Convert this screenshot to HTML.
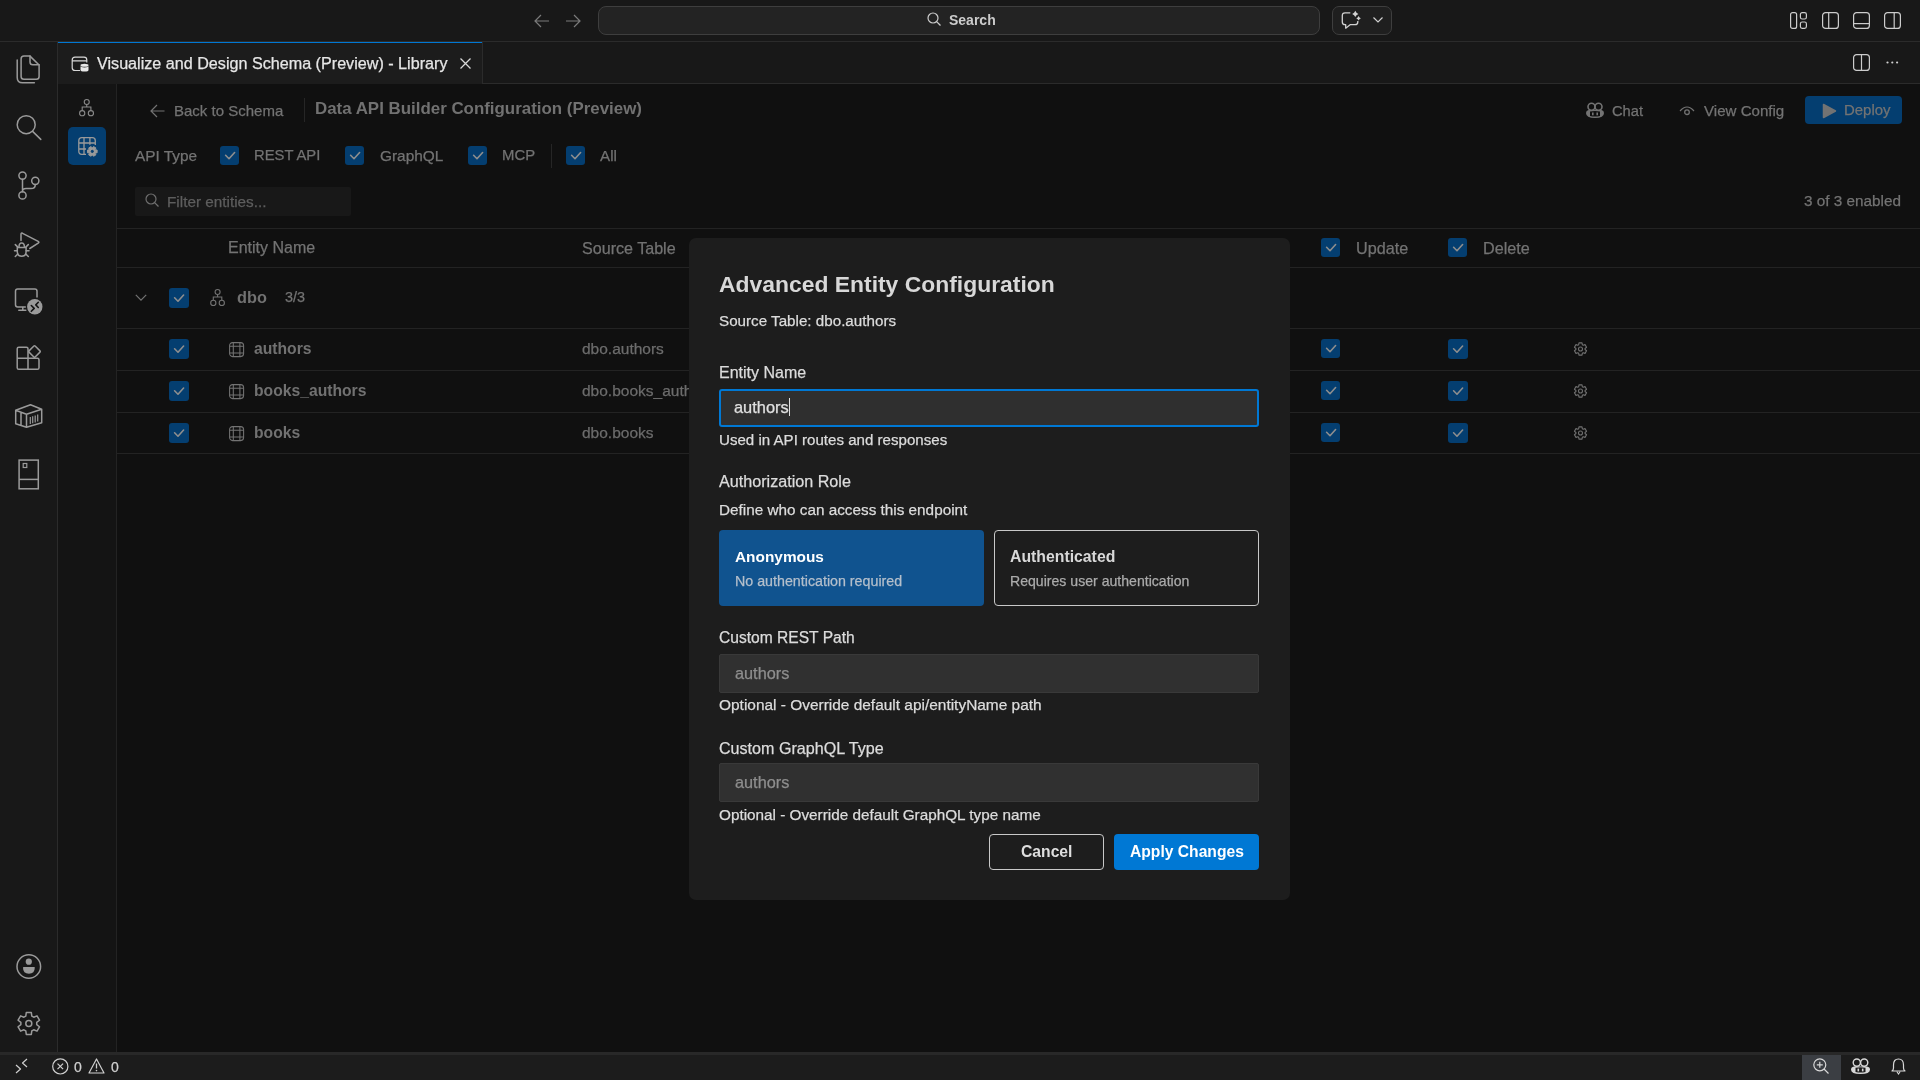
<!DOCTYPE html>
<html><head><meta charset="utf-8">
<title>Data API Builder Configuration</title>
<style>
*{box-sizing:border-box;margin:0;padding:0}
html,body{width:1920px;height:1080px;overflow:hidden;background:#101010;font-family:"Liberation Sans",sans-serif;color:#ccc;position:relative}
.abs{position:absolute}
svg{position:absolute;overflow:visible}
.t{position:absolute;white-space:nowrap;line-height:1;will-change:transform}
</style></head>
<body>
<div class="abs" style="left:0px;top:0px;width:1920px;height:41px;background:#181818"></div>
<div class="abs" style="left:0px;top:41px;width:1920px;height:1px;background:#2b2b2b"></div>
<div class="abs" style="left:0px;top:42px;width:57px;height:1011px;background:#181818"></div>
<div class="abs" style="left:57px;top:42px;width:1px;height:1011px;background:#2b2b2b"></div>
<div class="abs" style="left:58px;top:42px;width:1862px;height:41px;background:#181818"></div>
<div class="abs" style="left:483px;top:83px;width:1437px;height:1px;background:#2b2b2b"></div>
<div class="abs" style="left:58px;top:42px;width:424px;height:42px;background:#1c1c1c"></div>
<div class="abs" style="left:58px;top:42px;width:424px;height:1px;background:#0078d4"></div>
<div class="abs" style="left:482px;top:42px;width:1px;height:42px;background:#2b2b2b"></div>
<div class="abs" style="left:58px;top:84px;width:58px;height:968px;background:#141414"></div>
<div class="abs" style="left:116px;top:84px;width:1px;height:968px;background:#232323"></div>
<div class="abs" style="left:0px;top:1052px;width:1920px;height:3px;background:#282828"></div>
<div class="abs" style="left:0px;top:1055px;width:1920px;height:25px;background:#1c1c1c"></div>
<svg style="left:534px;top:14px;" width="16" height="14" viewBox="0 0 16 14" fill="none"><path d="M7 1 L1 7 L7 13 M1 7 H15" stroke="#7b7b7b" stroke-width="1.2"/></svg>
<svg style="left:565px;top:14px;" width="16" height="14" viewBox="0 0 16 14" fill="none"><path d="M9 1 L15 7 L9 13 M15 7 H1" stroke="#7b7b7b" stroke-width="1.2"/></svg>
<div class="abs" style="left:598px;top:6px;width:722px;height:29px;background:#232323;border:1px solid #3e3e3e;border-radius:8px"></div>
<svg style="left:927px;top:12px;" width="14" height="14" viewBox="0 0 14 14" fill="none"><circle cx="6" cy="6" r="5" stroke="#cccccc" stroke-width="1.2"/><path d="M9.6 9.6 L13.5 13.5" stroke="#cccccc" stroke-width="1.3"/></svg>
<div class="t" style="left:948.5px;top:13.15px;font-size:14px;color:#cccccc;font-weight:700;">Search</div>
<div class="abs" style="left:1332px;top:6px;width:60px;height:29px;background:#1f1f1f;border:1px solid #3e3e3e;border-radius:7px"></div>
<svg style="left:1341px;top:11px;" width="20" height="18" viewBox="0 0 20 18" fill="none"><path d="M9.3 1.8 H4 Q1.3 1.8 1.3 4.5 V11 Q1.3 13.7 4 13.7 H4.7 V17.2 L9.1 13.7 H14.1 Q16.8 13.7 16.8 11 V9.9" stroke="#d0d0d0" stroke-width="1.3" stroke-linejoin="round"/><path d="M14.3 -0.20000000000000018 Q15.168000000000001 2.032 17.400000000000002 2.9 Q15.168000000000001 3.768 14.3 6.0 Q13.432 3.768 11.200000000000001 2.9 Q13.432 2.032 14.3 -0.20000000000000018 Z" fill="#d0d0d0"/><path d="M17.6 4.9 Q18.244 6.556 19.900000000000002 7.2 Q18.244 7.844 17.6 9.5 Q16.956000000000003 7.844 15.3 7.2 Q16.956000000000003 6.556 17.6 4.9 Z" fill="#d0d0d0"/></svg>
<svg style="left:1373px;top:17px;" width="10" height="6" viewBox="0 0 10 6" fill="none"><path d="M0.5 0.5 L5 5 L9.5 0.5" stroke="#d0d0d0" stroke-width="1.2"/></svg>
<svg style="left:1790px;top:12px;" width="17" height="17" viewBox="0 0 17 17" fill="none"><rect x="0.6" y="0.6" width="6" height="15.8" rx="2" stroke="#cccccc" stroke-width="1.2"/><rect x="10.4" y="0.6" width="6" height="6.4" rx="1.8" stroke="#cccccc" stroke-width="1.2"/><rect x="10.4" y="10" width="6" height="6.4" rx="1.8" stroke="#cccccc" stroke-width="1.2"/></svg>
<svg style="left:1822px;top:12px;" width="17" height="17" viewBox="0 0 17 17" fill="none"><rect x="0.6" y="0.6" width="15.8" height="15.8" rx="3" stroke="#cccccc" stroke-width="1.2"/><path d="M6.7 0.6 V16.4" stroke="#cccccc" stroke-width="1.2"/></svg>
<svg style="left:1853px;top:12px;" width="17" height="17" viewBox="0 0 17 17" fill="none"><rect x="0.6" y="0.6" width="15.8" height="15.8" rx="3" stroke="#cccccc" stroke-width="1.2"/><path d="M0.6 11.6 H16.4" stroke="#cccccc" stroke-width="1.2"/></svg>
<svg style="left:1884px;top:12px;" width="17" height="17" viewBox="0 0 17 17" fill="none"><rect x="0.6" y="0.6" width="15.8" height="15.8" rx="3" stroke="#cccccc" stroke-width="1.2"/><path d="M10.2 0.6 V16.4" stroke="#cccccc" stroke-width="1.2"/></svg>
<svg style="left:71px;top:56px;" width="18" height="16" viewBox="0 0 18 16" fill="none"><path d="M9 14.5 H4 Q1.2 14.5 1.2 11.8 V4 Q1.2 1.2 4 1.2 H13 Q15.8 1.2 15.8 4 V6.5 M1.2 4.8 H15.8" stroke="#d8d8d8" stroke-width="1.2"/><ellipse cx="13.5" cy="9.2" rx="4" ry="1.5" fill="#e8e8e8"/><path d="M9.5 10 V14 Q9.5 15.6 13.5 15.6 Q17.5 15.6 17.5 14 V10 Q17.5 11.4 13.5 11.4 Q9.5 11.4 9.5 10 Z" fill="#e8e8e8"/></svg>
<div class="t" style="left:97px;top:55.33px;font-size:16.15px;color:#e6e6e6;-webkit-text-stroke:0.25px #e6e6e6;">Visualize and Design Schema (Preview) - Library</div>
<svg style="left:460px;top:58px;" width="11" height="11" viewBox="0 0 11 11" fill="none"><path d="M0.5 0.5 L10.5 10.5 M10.5 0.5 L0.5 10.5" stroke="#d8d8d8" stroke-width="1.3"/></svg>
<svg style="left:1853px;top:54px;" width="17" height="17" viewBox="0 0 17 17" fill="none"><rect x="0.6" y="0.6" width="15.8" height="15.8" rx="3" stroke="#cccccc" stroke-width="1.2"/><path d="M8.5 0.6 V16.4" stroke="#cccccc" stroke-width="1.2"/></svg>
<svg style="left:1886px;top:61px;" width="13" height="3" viewBox="0 0 13 3" fill="none"><circle cx="1.5" cy="1.5" r="1.1" fill="#d0d0d0"/><circle cx="6.3" cy="1.5" r="1.1" fill="#d0d0d0"/><circle cx="11.1" cy="1.5" r="1.1" fill="#d0d0d0"/></svg>
<svg style="left:10px;top:50px;" width="36" height="40" viewBox="0 0 36 40" fill="none"><path d="M14 6.1 H20 L29.1 15 V26.5 Q29.1 29.3 26.3 29.3 H14 Q11.1 29.3 11.1 26.5 V9 Q11.1 6.1 14 6.1 Z" stroke="#9a9a9a" stroke-width="1.5" stroke-linejoin="round" stroke-linecap="round"/><path d="M20 6.1 V12 Q20 14.8 22.8 14.8 H29.1" stroke="#9a9a9a" stroke-width="1.5" stroke-linejoin="round" stroke-linecap="round"/><path d="M7.2 10 V27.5 Q7.2 32.8 12.5 32.8 H24.4" stroke="#9a9a9a" stroke-width="1.5" stroke-linejoin="round" stroke-linecap="round"/></svg>
<svg style="left:10px;top:110px;" width="36" height="36" viewBox="0 0 36 36" fill="none"><circle cx="16.2" cy="14.7" r="9" stroke="#9a9a9a" stroke-width="1.5" stroke-linejoin="round" stroke-linecap="round"/><path d="M22.6 21.4 L30.8 29.4" stroke="#9a9a9a" stroke-width="1.5" stroke-linejoin="round" stroke-linecap="round"/></svg>
<svg style="left:10px;top:166px;" width="36" height="40" viewBox="0 0 36 40" fill="none"><circle cx="12.5" cy="9.6" r="3.6" stroke="#9a9a9a" stroke-width="1.5" stroke-linejoin="round" stroke-linecap="round"/><circle cx="25.3" cy="14.8" r="3.6" stroke="#9a9a9a" stroke-width="1.5" stroke-linejoin="round" stroke-linecap="round"/><circle cx="12.5" cy="29.4" r="3.6" stroke="#9a9a9a" stroke-width="1.5" stroke-linejoin="round" stroke-linecap="round"/><path d="M12.5 13.2 V25.8 M25.3 18.4 Q25.3 22.5 21 22.5 H16 Q12.5 22.5 12.5 25.5" stroke="#9a9a9a" stroke-width="1.5" stroke-linejoin="round" stroke-linecap="round"/></svg>
<svg style="left:10px;top:226px;" width="36" height="36" viewBox="0 0 36 36" fill="none"><path d="M11 14.5 V8.3 Q11 6.6 12.6 7.3 L28.2 15.4 Q29.6 16.3 28.2 17.2 L19.8 22.5" stroke="#9a9a9a" stroke-width="1.5" stroke-linejoin="round" stroke-linecap="round"/><path d="M9 20.8 Q9 17 11.7 17 Q14.4 17 14.4 20.8" stroke="#9a9a9a" stroke-width="1.5" stroke-linejoin="round" stroke-linecap="round"/><path d="M7.3 21.6 H16.1 V25.8 Q16.1 30.2 11.7 30.2 Q7.3 30.2 7.3 25.8 Z" stroke="#9a9a9a" stroke-width="1.5" stroke-linejoin="round" stroke-linecap="round"/><path d="M5.3 18.6 L7.6 20.9 M18.3 18.6 L16 20.9 M4.5 24.7 H7.3 M16.1 24.7 H19 M5.3 30.5 L7.8 28 M18.3 30.5 L15.8 28" stroke="#9a9a9a" stroke-width="1.5" stroke-linejoin="round" stroke-linecap="round"/></svg>
<svg style="left:10px;top:284px;" width="36" height="36" viewBox="0 0 36 36" fill="none"><path d="M27 13 V7.2 Q27 5 24.8 5 H7.7 Q5.5 5 5.5 7.2 V20.8 Q5.5 23 7.7 23 H15.3 M12.8 23 V26.3 M8.8 26.3 H15.8" stroke="#9a9a9a" stroke-width="1.5" stroke-linejoin="round" stroke-linecap="round"/><circle cx="24.8" cy="22.7" r="7.7" fill="#9a9a9a"/><path d="M21.3 21.5 L24.2 24.4 L21.3 27.3 M28.3 18.3 L25.8 20.9 L28.3 23.5" stroke="#141414" stroke-width="1.6" stroke-linecap="round" stroke-linejoin="round"/></svg>
<svg style="left:10px;top:340px;" width="36" height="36" viewBox="0 0 36 36" fill="none"><path d="M18 18.2 V8.8 Q18 7.2 16.4 7.2 H8.8 Q7.2 7.2 7.2 8.8 V27.7 Q7.2 29.3 8.8 29.3 H27.4 Q29 29.3 29 27.7 V19.8 Q29 18.2 27.4 18.2 H7.2 M18 18.2 V29.3" stroke="#9a9a9a" stroke-width="1.5" stroke-linejoin="round" stroke-linecap="round"/><path d="M23.9 6 Q24.5 5.4 25.1 6 L30 10.9 Q30.6 11.5 30 12.1 L25.1 17 Q24.5 17.6 23.9 17 L19 12.1 Q18.4 11.5 19 10.9 Z" stroke="#9a9a9a" stroke-width="1.5" stroke-linejoin="round" stroke-linecap="round"/></svg>
<svg style="left:10px;top:398px;" width="36" height="36" viewBox="0 0 36 36" fill="none"><path d="M5.7 12.3 L20.5 6.7 L31.7 11.3 V24.7 L16.5 29.3 L5.7 25.7 Z M5.7 12.3 L16.5 16.3 L31.7 11.3 M16.5 16.3 V29.3 M11 14.5 V27.5" stroke="#9a9a9a" stroke-width="1.5" stroke-linejoin="round" stroke-linecap="round"/><path d="M20.3 19 V26 M22.7 18.2 V25.2 M25.2 17.4 V24.4 M27.7 16.6 V23.6" stroke="#9a9a9a" stroke-width="1.2"/></svg>
<svg style="left:10px;top:454px;" width="36" height="40" viewBox="0 0 36 40" fill="none"><rect x="9.1" y="6.1" width="19.2" height="28.7" stroke="#9a9a9a" stroke-width="1.5"/><path d="M9.1 25.4 H28.3" stroke="#9a9a9a" stroke-width="1.5"/><rect x="13.2" y="9.5" width="3.6" height="4" stroke="#9a9a9a" stroke-width="1.2"/></svg>
<svg style="left:10px;top:948px;" width="36" height="36" viewBox="0 0 36 36" fill="none"><circle cx="18.8" cy="18.5" r="11.8" stroke="#9a9a9a" stroke-width="1.5" stroke-linejoin="round" stroke-linecap="round"/><circle cx="18.8" cy="13.7" r="3.1" fill="#9a9a9a"/><path d="M13 19.6 Q13 19 13.6 19 H24 Q24.8 19 24.8 19.6 Q24.8 25.8 18.9 25.8 Q13 25.8 13 19.6 Z" fill="#9a9a9a"/></svg>
<svg style="left:10px;top:1005px;" width="36" height="36" viewBox="0 0 36 36" fill="none"><path d="M15.80 11.08 L16.28 7.59 L21.32 7.59 L21.80 11.08 L23.73 12.20 L26.99 10.86 L29.51 15.23 L26.72 17.39 L26.72 19.61 L29.51 21.77 L26.99 26.14 L23.73 24.80 L21.80 25.92 L21.32 29.41 L16.28 29.41 L15.80 25.92 L13.87 24.80 L10.61 26.14 L8.09 21.77 L10.88 19.61 L10.88 17.39 L8.09 15.23 L10.61 10.86 L13.87 12.20 Z" stroke="#9a9a9a" stroke-width="1.5" stroke-linejoin="round" fill="none"/><circle cx="18.8" cy="18.5" r="3.0" stroke="#9a9a9a" stroke-width="1.5"/></svg>
<svg style="left:79px;top:99px;" width="16" height="18" viewBox="0 0 16 18" fill="none"><circle cx="7.75" cy="3" r="2.5" stroke="#8a8a8a" stroke-width="1.1"/><circle cx="3.2" cy="14.2" r="2.6" stroke="#8a8a8a" stroke-width="1.1"/><circle cx="11.9" cy="14.2" r="2.6" stroke="#8a8a8a" stroke-width="1.1"/><path d="M7.75 5.5 V8 M3.2 11.6 V8 H11.9 V11.6" stroke="#8a8a8a" stroke-width="1.1"/></svg>
<div class="abs" style="left:68px;top:127px;width:38px;height:38px;background:#043e70;border-radius:5px"></div>
<svg style="left:72px;top:131px;" width="30" height="30" viewBox="0 0 30 30" fill="none"><path d="M14 23.3 H9.8 Q6.8 23.3 6.8 20.3 V9.7 Q6.8 6.7 9.8 6.7 H20.3 Q23.3 6.7 23.3 9.7 V14 M12 6.7 V23.3 M17.9 6.7 V13.8 M6.8 12 H23.3 M6.8 18 H14" stroke="#9a9a9a" stroke-width="1.3"/><path d="M23.54 18.82 L25.11 19.02 L25.11 21.78 L23.54 21.98 L23.28 22.41 L23.90 23.87 L21.51 25.25 L20.55 23.99 L20.05 23.99 L19.09 25.25 L16.70 23.87 L17.32 22.41 L17.06 21.98 L15.49 21.78 L15.49 19.02 L17.06 18.82 L17.32 18.39 L16.70 16.93 L19.09 15.55 L20.05 16.81 L20.55 16.81 L21.51 15.55 L23.90 16.93 L23.28 18.39 Z" stroke="#9a9a9a" stroke-width="1.0" stroke-linejoin="round" fill="#9a9a9a"/><circle cx="20.3" cy="20.4" r="1.1" fill="#043e70" stroke="#043e70" stroke-width="1.0"/></svg>
<svg style="left:15px;top:1058px;" width="13" height="16" viewBox="0 0 13 16" fill="none"><path d="M1 7 L5.5 11 L1 15 M12 1 L7.5 5 L12 9" stroke="#cfcfcf" stroke-width="1.2" stroke-linejoin="round"/></svg>
<svg style="left:52px;top:1058px;" width="17" height="17" viewBox="0 0 17 17" fill="none"><circle cx="8.3" cy="8.4" r="7.6" stroke="#cfcfcf" stroke-width="1.2"/><path d="M5.5 5.6 L11.1 11.2 M11.1 5.6 L5.5 11.2" stroke="#cfcfcf" stroke-width="1.2"/></svg>
<div class="t" style="left:74px;top:1060.15px;font-size:14px;color:#cfcfcf;-webkit-text-stroke:0.25px #cfcfcf;">0</div>
<svg style="left:88px;top:1058px;" width="17" height="16" viewBox="0 0 17 16" fill="none"><path d="M8.5 1 L16 15 H1 Z" stroke="#cfcfcf" stroke-width="1.2" stroke-linejoin="round"/><path d="M8.5 5.5 V10.5" stroke="#cfcfcf" stroke-width="1.3"/><circle cx="8.5" cy="12.6" r="0.8" fill="#cfcfcf"/></svg>
<div class="t" style="left:110.8px;top:1060.15px;font-size:14px;color:#cfcfcf;-webkit-text-stroke:0.25px #cfcfcf;">0</div>
<div class="abs" style="left:1802px;top:1055px;width:39px;height:25px;background:#3b3e43"></div>
<svg style="left:1813px;top:1058px;" width="17" height="17" viewBox="0 0 17 17" fill="none"><circle cx="6.8" cy="6.8" r="6" stroke="#d8d8d8" stroke-width="1.2"/><path d="M11 11 L15.5 15.5 M6.8 3.8 V9.8 M3.8 6.8 H9.8" stroke="#d8d8d8" stroke-width="1.2"/></svg>
<svg style="left:1850px;top:1058px;" width="21" height="17" viewBox="0 0 21 17" fill="none"><path d="M4 8.5 Q1 9 1 11.5 Q1 16 10.5 16 Q20 16 20 11.5 Q20 9 17 8.5 Z" fill="#d8d8d8"/><circle cx="6.8" cy="4.6" r="3.6" stroke="#d8d8d8" stroke-width="1.4"/><circle cx="14.2" cy="4.6" r="3.6" stroke="#d8d8d8" stroke-width="1.4"/><path d="M5.5 9.8 Q10.5 8.8 15.5 9.8 V14 Q10.5 15 5.5 14 Z" fill="#1c1c1c"/><rect x="7.5" y="10.6" width="1.6" height="2.8" fill="#d8d8d8"/><rect x="11.9" y="10.6" width="1.6" height="2.8" fill="#d8d8d8"/></svg>
<svg style="left:1891px;top:1058px;" width="15" height="17" viewBox="0 0 15 17" fill="none"><path d="M1 13 Q2.5 12 2.5 10 V7 Q2.5 1 7.5 1 Q12.5 1 12.5 7 V10 Q12.5 12 14 13 Z" stroke="#d8d8d8" stroke-width="1.2" stroke-linejoin="round"/><path d="M5.8 13.5 L7.5 16 L9.2 13.5" stroke="#d8d8d8" stroke-width="1.1"/></svg>
<svg style="left:150px;top:104px;" width="15" height="14" viewBox="0 0 15 14" fill="none"><path d="M7 1 L1 7 L7 13 M1 7 H14.5" stroke="#737373" stroke-width="1.2"/></svg>
<div class="t" style="left:174.4px;top:102.90px;font-size:15px;color:#737373;-webkit-text-stroke:0.25px #737373;">Back to Schema</div>
<div class="abs" style="left:304px;top:98px;width:1px;height:24px;background:#262626"></div>
<div class="t" style="left:314.6px;top:100.69px;font-size:16.9px;color:#717171;font-weight:700;">Data API Builder Configuration (Preview)</div>
<svg style="left:1585px;top:102px;" width="20" height="17" viewBox="0 0 20 17" fill="none"><path d="M3.5 8 Q1 8.5 1 11 Q1 16 10 16 Q19 16 19 11 Q19 8.5 16.5 8 Z" fill="#737373"/><circle cx="6.5" cy="4.8" r="3.5" stroke="#737373" stroke-width="1.6"/><circle cx="13.5" cy="4.8" r="3.5" stroke="#737373" stroke-width="1.6"/><path d="M5 9.5 Q10 8.5 15 9.5 V14 Q10 15 5 14 Z" fill="#101010"/><rect x="7" y="10.5" width="1.6" height="2.8" fill="#737373"/><rect x="11.4" y="10.5" width="1.6" height="2.8" fill="#737373"/></svg>
<div class="t" style="left:1612.3px;top:103.56px;font-size:14.7px;color:#737373;-webkit-text-stroke:0.25px #737373;">Chat</div>
<svg style="left:1679px;top:105px;" width="16" height="11" viewBox="0 0 16 11" fill="none"><path d="M1 6 Q8 -2 15 6" stroke="#737373" stroke-width="1.2"/><circle cx="8" cy="7.2" r="2.3" stroke="#737373" stroke-width="1.3"/></svg>
<div class="t" style="left:1704px;top:103.22px;font-size:15.1px;color:#737373;-webkit-text-stroke:0.25px #737373;">View Config</div>
<div class="abs" style="left:1805px;top:96px;width:97px;height:28px;background:#043e70;border-radius:4px"></div>
<svg style="left:1822px;top:103px;" width="15" height="16" viewBox="0 0 15 16" fill="none"><path d="M1.5 1.5 L13.5 8 L1.5 14.5 Z" fill="#737373" stroke="#737373" stroke-width="1.5" stroke-linejoin="round"/></svg>
<div class="t" style="left:1844.3px;top:103.34px;font-size:14.95px;color:#737373;-webkit-text-stroke:0.25px #737373;">Deploy</div>
<div class="t" style="left:135px;top:147.96px;font-size:15.4px;color:#737373;-webkit-text-stroke:0.25px #737373;">API Type</div>
<div class="abs" style="left:220px;top:146px;width:19px;height:19px;background:#043e70;border-radius:3px"></div>
<svg style="left:220px;top:146px;" width="19" height="19" viewBox="0 0 19 19" fill="none"><path d="M5.6 9.3 L9 12.7 L14.6 6.5" stroke="#8e8e8e" stroke-width="1.6" stroke-linecap="round" stroke-linejoin="round"/></svg>
<div class="t" style="left:254.4px;top:148.47px;font-size:14.8px;color:#737373;-webkit-text-stroke:0.25px #737373;">REST API</div>
<div class="abs" style="left:345px;top:146px;width:19px;height:19px;background:#043e70;border-radius:3px"></div>
<svg style="left:345px;top:146px;" width="19" height="19" viewBox="0 0 19 19" fill="none"><path d="M5.6 9.3 L9 12.7 L14.6 6.5" stroke="#8e8e8e" stroke-width="1.6" stroke-linecap="round" stroke-linejoin="round"/></svg>
<div class="t" style="left:379.7px;top:147.96px;font-size:15.4px;color:#737373;-webkit-text-stroke:0.25px #737373;">GraphQL</div>
<div class="abs" style="left:468px;top:146px;width:19px;height:19px;background:#043e70;border-radius:3px"></div>
<svg style="left:468px;top:146px;" width="19" height="19" viewBox="0 0 19 19" fill="none"><path d="M5.6 9.3 L9 12.7 L14.6 6.5" stroke="#8e8e8e" stroke-width="1.6" stroke-linecap="round" stroke-linejoin="round"/></svg>
<div class="t" style="left:502.3px;top:148.39px;font-size:14.9px;color:#737373;-webkit-text-stroke:0.25px #737373;">MCP</div>
<div class="abs" style="left:551px;top:144px;width:1px;height:24px;background:#262626"></div>
<div class="abs" style="left:566px;top:146px;width:19px;height:19px;background:#043e70;border-radius:3px"></div>
<svg style="left:566px;top:146px;" width="19" height="19" viewBox="0 0 19 19" fill="none"><path d="M5.6 9.3 L9 12.7 L14.6 6.5" stroke="#8e8e8e" stroke-width="1.6" stroke-linecap="round" stroke-linejoin="round"/></svg>
<div class="t" style="left:600px;top:148.13px;font-size:15.2px;color:#737373;-webkit-text-stroke:0.25px #737373;">All</div>
<div class="abs" style="left:135px;top:187px;width:216px;height:29px;background:#181818;border-radius:2px"></div>
<svg style="left:145px;top:193px;" width="15" height="15" viewBox="0 0 15 15" fill="none"><circle cx="6" cy="6" r="5" stroke="#6f6f6f" stroke-width="1.2"/><path d="M9.6 9.6 L13.5 13.5" stroke="#6f6f6f" stroke-width="1.3"/></svg>
<div class="t" style="left:167.3px;top:193.95px;font-size:15.3px;color:#5e5e5e;-webkit-text-stroke:0.25px #5e5e5e;">Filter entities...</div>
<div class="t" style="right:18.799999999999955px;top:193.05px;font-size:15.3px;color:#737373;-webkit-text-stroke:0.25px #737373;">3 of 3 enabled</div>
<div class="abs" style="left:117px;top:228px;width:1803px;height:1px;background:#232323"></div>
<div class="t" style="left:227.5px;top:240.36px;font-size:16px;color:#737373;-webkit-text-stroke:0.25px #737373;">Entity Name</div>
<div class="t" style="left:582.4px;top:240.27px;font-size:16.1px;color:#737373;-webkit-text-stroke:0.25px #737373;">Source Table</div>
<div class="abs" style="left:1321px;top:238px;width:19px;height:19px;background:#043e70;border-radius:3px"></div>
<svg style="left:1321px;top:238px;" width="19" height="19" viewBox="0 0 19 19" fill="none"><path d="M5.6 9.3 L9 12.7 L14.6 6.5" stroke="#8e8e8e" stroke-width="1.6" stroke-linecap="round" stroke-linejoin="round"/></svg>
<div class="t" style="left:1355.5px;top:240.19px;font-size:16.2px;color:#737373;-webkit-text-stroke:0.25px #737373;">Update</div>
<div class="abs" style="left:1448px;top:238px;width:19px;height:19px;background:#043e70;border-radius:3px"></div>
<svg style="left:1448px;top:238px;" width="19" height="19" viewBox="0 0 19 19" fill="none"><path d="M5.6 9.3 L9 12.7 L14.6 6.5" stroke="#8e8e8e" stroke-width="1.6" stroke-linecap="round" stroke-linejoin="round"/></svg>
<div class="t" style="left:1482.5px;top:240.19px;font-size:16.2px;color:#737373;-webkit-text-stroke:0.25px #737373;">Delete</div>
<div class="abs" style="left:117px;top:267px;width:1803px;height:1px;background:#232323"></div>
<svg style="left:135px;top:294px;" width="12" height="8" viewBox="0 0 12 8" fill="none"><path d="M0.8 0.8 L6 6.2 L11.2 0.8" stroke="#737373" stroke-width="1.2"/></svg>
<div class="abs" style="left:169px;top:288px;width:20px;height:20px;background:#043e70;border-radius:3px"></div>
<svg style="left:169px;top:288px;" width="20" height="20" viewBox="0 0 20 20" fill="none"><path d="M5.6 9.8 L9 13.2 L14.6 7.0" stroke="#8e8e8e" stroke-width="1.6" stroke-linecap="round" stroke-linejoin="round"/></svg>
<svg style="left:210px;top:289px;" width="16" height="18" viewBox="0 0 16 18" fill="none"><circle cx="7.6" cy="3" r="2.5" stroke="#737373" stroke-width="1.1"/><circle cx="3.3" cy="13.9" r="2.6" stroke="#737373" stroke-width="1.1"/><circle cx="11.8" cy="13.9" r="2.6" stroke="#737373" stroke-width="1.1"/><path d="M7.6 5.5 V8 M3.3 11.3 V8 H11.8 V11.3" stroke="#737373" stroke-width="1.1"/></svg>
<div class="t" style="left:237px;top:288.70px;font-size:16.3px;color:#717171;font-weight:700;">dbo</div>
<div class="t" style="left:284.9px;top:290.31px;font-size:14.4px;color:#737373;-webkit-text-stroke:0.25px #737373;">3/3</div>
<div class="abs" style="left:117px;top:328px;width:1803px;height:1px;background:#232323"></div>
<div class="abs" style="left:169px;top:339px;width:20px;height:20px;background:#043e70;border-radius:3px"></div>
<svg style="left:169px;top:339px;" width="20" height="20" viewBox="0 0 20 20" fill="none"><path d="M5.6 9.8 L9 13.2 L14.6 7.0" stroke="#8e8e8e" stroke-width="1.6" stroke-linecap="round" stroke-linejoin="round"/></svg>
<svg style="left:229px;top:342px;" width="15" height="15" viewBox="0 0 15 15" fill="none"><rect x="0.6" y="0.6" width="14" height="14" rx="3" stroke="#737373" stroke-width="1.05"/><path d="M4.3 0.6 V14.6 M10.9 0.6 V14.6 M0.6 4.3 H14.6 M0.6 10.9 H14.6" stroke="#737373" stroke-width="1.05"/></svg>
<div class="t" style="left:253.7px;top:340.71px;font-size:15.7px;color:#717171;font-weight:700;">authors</div>
<div class="t" style="left:582.4px;top:340.88px;font-size:15.5px;color:#6c6c6c;-webkit-text-stroke:0.25px #6c6c6c;">dbo.authors</div>
<div class="abs" style="left:1321px;top:339px;width:19px;height:19px;background:#043e70;border-radius:3px"></div>
<svg style="left:1321px;top:339px;" width="19" height="19" viewBox="0 0 19 19" fill="none"><path d="M5.6 9.3 L9 12.7 L14.6 6.5" stroke="#8e8e8e" stroke-width="1.6" stroke-linecap="round" stroke-linejoin="round"/></svg>
<div class="abs" style="left:1448px;top:339px;width:20px;height:20px;background:#043e70;border-radius:3px"></div>
<svg style="left:1448px;top:339px;" width="20" height="20" viewBox="0 0 20 20" fill="none"><path d="M5.6 9.8 L9 13.2 L14.6 7.0" stroke="#8e8e8e" stroke-width="1.6" stroke-linecap="round" stroke-linejoin="round"/></svg>
<svg style="left:1571px;top:340px;" width="20" height="20" viewBox="0 0 20 20" fill="none"><path d="M7.63 4.80 L7.98 2.89 L11.02 2.89 L11.37 4.80 L12.20 5.28 L14.03 4.62 L15.56 7.26 L14.07 8.52 L14.07 9.48 L15.56 10.74 L14.03 13.38 L12.20 12.72 L11.37 13.20 L11.02 15.11 L7.98 15.11 L7.63 13.20 L6.80 12.72 L4.97 13.38 L3.44 10.74 L4.93 9.48 L4.93 8.52 L3.44 7.26 L4.97 4.62 L6.80 5.28 Z" stroke="#707070" stroke-width="1.1" stroke-linejoin="round" fill="none"/><circle cx="9.5" cy="9.0" r="2.0" stroke="#707070" stroke-width="1.1"/></svg>
<div class="abs" style="left:117px;top:370px;width:1803px;height:1px;background:#232323"></div>
<div class="abs" style="left:169px;top:381px;width:20px;height:20px;background:#043e70;border-radius:3px"></div>
<svg style="left:169px;top:381px;" width="20" height="20" viewBox="0 0 20 20" fill="none"><path d="M5.6 9.8 L9 13.2 L14.6 7.0" stroke="#8e8e8e" stroke-width="1.6" stroke-linecap="round" stroke-linejoin="round"/></svg>
<svg style="left:229px;top:384px;" width="15" height="15" viewBox="0 0 15 15" fill="none"><rect x="0.6" y="0.6" width="14" height="14" rx="3" stroke="#737373" stroke-width="1.05"/><path d="M4.3 0.6 V14.6 M10.9 0.6 V14.6 M0.6 4.3 H14.6 M0.6 10.9 H14.6" stroke="#737373" stroke-width="1.05"/></svg>
<div class="t" style="left:253.7px;top:382.71px;font-size:15.7px;color:#717171;font-weight:700;">books_authors</div>
<div class="t" style="left:582.4px;top:382.88px;font-size:15.5px;color:#6c6c6c;-webkit-text-stroke:0.25px #6c6c6c;">dbo.books_authors</div>
<div class="abs" style="left:1321px;top:381px;width:19px;height:19px;background:#043e70;border-radius:3px"></div>
<svg style="left:1321px;top:381px;" width="19" height="19" viewBox="0 0 19 19" fill="none"><path d="M5.6 9.3 L9 12.7 L14.6 6.5" stroke="#8e8e8e" stroke-width="1.6" stroke-linecap="round" stroke-linejoin="round"/></svg>
<div class="abs" style="left:1448px;top:381px;width:20px;height:20px;background:#043e70;border-radius:3px"></div>
<svg style="left:1448px;top:381px;" width="20" height="20" viewBox="0 0 20 20" fill="none"><path d="M5.6 9.8 L9 13.2 L14.6 7.0" stroke="#8e8e8e" stroke-width="1.6" stroke-linecap="round" stroke-linejoin="round"/></svg>
<svg style="left:1571px;top:382px;" width="20" height="20" viewBox="0 0 20 20" fill="none"><path d="M7.63 4.80 L7.98 2.89 L11.02 2.89 L11.37 4.80 L12.20 5.28 L14.03 4.62 L15.56 7.26 L14.07 8.52 L14.07 9.48 L15.56 10.74 L14.03 13.38 L12.20 12.72 L11.37 13.20 L11.02 15.11 L7.98 15.11 L7.63 13.20 L6.80 12.72 L4.97 13.38 L3.44 10.74 L4.93 9.48 L4.93 8.52 L3.44 7.26 L4.97 4.62 L6.80 5.28 Z" stroke="#707070" stroke-width="1.1" stroke-linejoin="round" fill="none"/><circle cx="9.5" cy="9.0" r="2.0" stroke="#707070" stroke-width="1.1"/></svg>
<div class="abs" style="left:117px;top:412px;width:1803px;height:1px;background:#232323"></div>
<div class="abs" style="left:169px;top:423px;width:20px;height:20px;background:#043e70;border-radius:3px"></div>
<svg style="left:169px;top:423px;" width="20" height="20" viewBox="0 0 20 20" fill="none"><path d="M5.6 9.8 L9 13.2 L14.6 7.0" stroke="#8e8e8e" stroke-width="1.6" stroke-linecap="round" stroke-linejoin="round"/></svg>
<svg style="left:229px;top:426px;" width="15" height="15" viewBox="0 0 15 15" fill="none"><rect x="0.6" y="0.6" width="14" height="14" rx="3" stroke="#737373" stroke-width="1.05"/><path d="M4.3 0.6 V14.6 M10.9 0.6 V14.6 M0.6 4.3 H14.6 M0.6 10.9 H14.6" stroke="#737373" stroke-width="1.05"/></svg>
<div class="t" style="left:253.7px;top:424.71px;font-size:15.7px;color:#717171;font-weight:700;">books</div>
<div class="t" style="left:582.4px;top:424.88px;font-size:15.5px;color:#6c6c6c;-webkit-text-stroke:0.25px #6c6c6c;">dbo.books</div>
<div class="abs" style="left:1321px;top:423px;width:19px;height:19px;background:#043e70;border-radius:3px"></div>
<svg style="left:1321px;top:423px;" width="19" height="19" viewBox="0 0 19 19" fill="none"><path d="M5.6 9.3 L9 12.7 L14.6 6.5" stroke="#8e8e8e" stroke-width="1.6" stroke-linecap="round" stroke-linejoin="round"/></svg>
<div class="abs" style="left:1448px;top:423px;width:20px;height:20px;background:#043e70;border-radius:3px"></div>
<svg style="left:1448px;top:423px;" width="20" height="20" viewBox="0 0 20 20" fill="none"><path d="M5.6 9.8 L9 13.2 L14.6 7.0" stroke="#8e8e8e" stroke-width="1.6" stroke-linecap="round" stroke-linejoin="round"/></svg>
<svg style="left:1571px;top:424px;" width="20" height="20" viewBox="0 0 20 20" fill="none"><path d="M7.63 4.80 L7.98 2.89 L11.02 2.89 L11.37 4.80 L12.20 5.28 L14.03 4.62 L15.56 7.26 L14.07 8.52 L14.07 9.48 L15.56 10.74 L14.03 13.38 L12.20 12.72 L11.37 13.20 L11.02 15.11 L7.98 15.11 L7.63 13.20 L6.80 12.72 L4.97 13.38 L3.44 10.74 L4.93 9.48 L4.93 8.52 L3.44 7.26 L4.97 4.62 L6.80 5.28 Z" stroke="#707070" stroke-width="1.1" stroke-linejoin="round" fill="none"/><circle cx="9.5" cy="9.0" r="2.0" stroke="#707070" stroke-width="1.1"/></svg>
<div class="abs" style="left:117px;top:453px;width:1803px;height:1px;background:#232323"></div>
<div class="abs" style="left:689px;top:238px;width:601px;height:662px;background:#1d1d1d;border-radius:7px"></div>
<div class="t" style="left:719.4px;top:273.32px;font-size:22.9px;color:#d8d8d8;font-weight:700;">Advanced Entity Configuration</div>
<div class="t" style="left:719px;top:313.13px;font-size:15.2px;color:#dcdcdc;-webkit-text-stroke:0.25px #dcdcdc;">Source Table: dbo.authors</div>
<div class="t" style="left:719.4px;top:364.76px;font-size:16px;color:#dcdcdc;-webkit-text-stroke:0.25px #dcdcdc;">Entity Name</div>
<div class="abs" style="left:719px;top:389px;width:540px;height:38px;background:#2f2f2f;border:2px solid #0078d4;border-radius:3px"></div>
<div class="t" style="left:734.3px;top:399.32px;font-size:16.4px;color:#e0e0e0;-webkit-text-stroke:0.25px #e0e0e0;">authors</div>
<div class="abs" style="left:789px;top:398px;width:1px;height:18px;background:#e0e0e0"></div>
<div class="t" style="left:719px;top:432.22px;font-size:15.1px;color:#dcdcdc;-webkit-text-stroke:0.25px #dcdcdc;">Used in API routes and responses</div>
<div class="t" style="left:719px;top:473.33px;font-size:16.15px;color:#dcdcdc;-webkit-text-stroke:0.25px #dcdcdc;">Authorization Role</div>
<div class="t" style="left:719px;top:501.85px;font-size:15.3px;color:#dcdcdc;-webkit-text-stroke:0.25px #dcdcdc;">Define who can access this endpoint</div>
<div class="abs" style="left:719px;top:530px;width:265px;height:76px;background:#10538f;border-radius:4px"></div>
<div class="t" style="left:734.6px;top:549.16px;font-size:15.4px;color:#ffffff;font-weight:700;">Anonymous</div>
<div class="t" style="left:734.6px;top:573.64px;font-size:14.25px;color:#b4bfcb;-webkit-text-stroke:0.25px #b4bfcb;">No authentication required</div>
<div class="abs" style="left:994px;top:530px;width:265px;height:76px;border:1px solid #c8c8c8;border-radius:4px"></div>
<div class="t" style="left:1009.6px;top:548.83px;font-size:15.8px;color:#d8d8d8;font-weight:700;">Authenticated</div>
<div class="t" style="left:1009.6px;top:573.76px;font-size:14.1px;color:#ababab;-webkit-text-stroke:0.25px #ababab;">Requires user authentication</div>
<div class="t" style="left:719px;top:630.49px;font-size:15.6px;color:#dcdcdc;-webkit-text-stroke:0.25px #dcdcdc;">Custom REST Path</div>
<div class="abs" style="left:719px;top:654px;width:540px;height:39px;background:#303030;border:1px solid #393939;border-radius:2px"></div>
<div class="t" style="left:734.5px;top:664.90px;font-size:16.3px;color:#8e8e8e;-webkit-text-stroke:0.25px #8e8e8e;">authors</div>
<div class="t" style="left:719px;top:696.72px;font-size:15.45px;color:#dcdcdc;-webkit-text-stroke:0.25px #dcdcdc;">Optional - Override default api/entityName path</div>
<div class="t" style="left:719px;top:739.77px;font-size:16.1px;color:#dcdcdc;-webkit-text-stroke:0.25px #dcdcdc;">Custom GraphQL Type</div>
<div class="abs" style="left:719px;top:763px;width:540px;height:39px;background:#303030;border:1px solid #393939;border-radius:2px"></div>
<div class="t" style="left:734.5px;top:774.20px;font-size:16.3px;color:#8e8e8e;-webkit-text-stroke:0.25px #8e8e8e;">authors</div>
<div class="t" style="left:719px;top:806.75px;font-size:15.3px;color:#dcdcdc;-webkit-text-stroke:0.25px #dcdcdc;">Optional - Override default GraphQL type name</div>
<div class="abs" style="left:989px;top:834px;width:115px;height:36px;border:1px solid #c8c8c8;border-radius:4px"></div>
<div class="t" style="left:1021px;top:844.21px;font-size:15.7px;color:#dedede;font-weight:700;">Cancel</div>
<div class="abs" style="left:1114px;top:834px;width:145px;height:36px;background:#0078d4;border-radius:4px"></div>
<div class="t" style="left:1129.7px;top:844.25px;font-size:15.65px;color:#ffffff;font-weight:700;">Apply Changes</div>
</body></html>
